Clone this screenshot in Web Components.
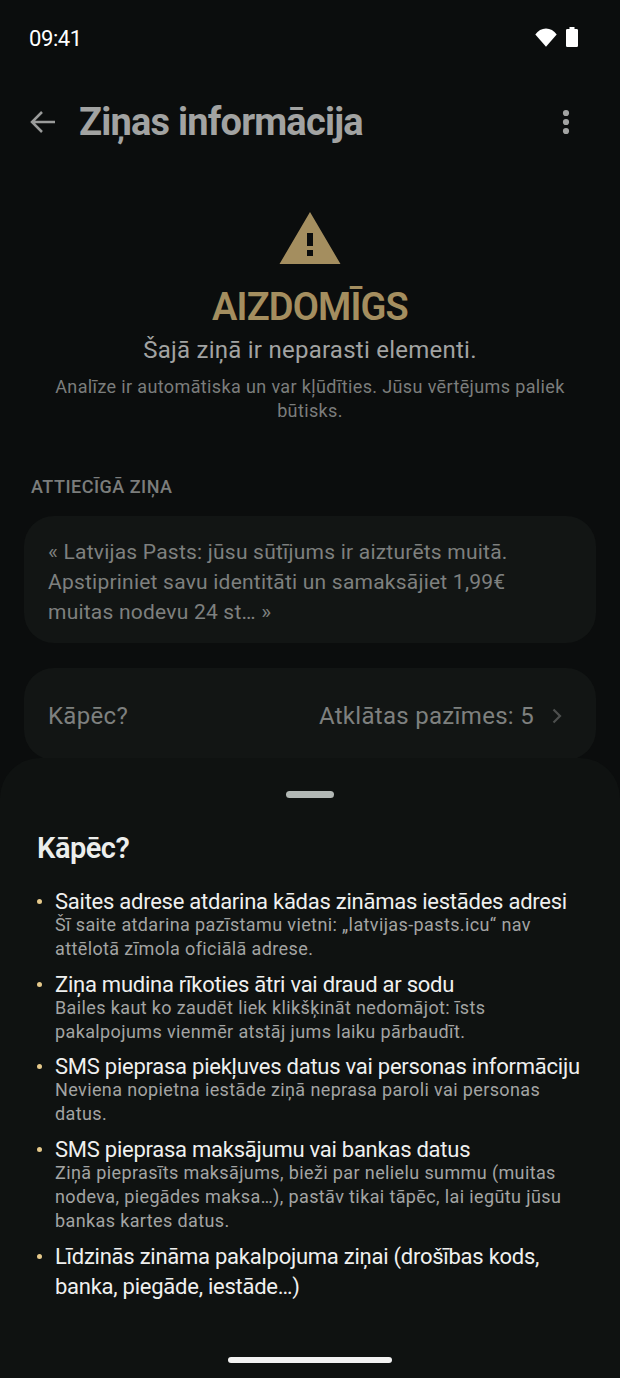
<!DOCTYPE html>
<html lang="lv"><head><meta charset="utf-8">
<style>
html,body{margin:0;padding:0;background:#0b0d0d}
body{width:620px;height:1378px;overflow:hidden;font-family:Roboto,"Noto Sans",sans-serif}
</style></head><body>
<app-screen>
  <status-bar></status-bar>
  <top-bar title="Ziņas informācija"></top-bar>
  <verdict-hero></verdict-hero>
  <section-label>ATTIECĪGĀ ZIŅA</section-label>
  <quote-card>« Latvijas Pasts: jūsu sūtījums ir aizturēts muitā. Apstipriniet savu identitāti un samaksājiet 1,99€ muitas nodevu 24 st… »</quote-card>
  <why-row></why-row>
  <bottom-sheet slot="sheet">
    <reason-item head="Saites adrese atdarina kādas zināmas iestādes adresi">Šī saite atdarina pazīstamu vietni: „latvijas-pasts.icu“ nav attēlotā zīmola oficiālā adrese.</reason-item>
    <reason-item head="Ziņa mudina rīkoties ātri vai draud ar sodu">Bailes kaut ko zaudēt liek klikšķināt nedomājot: īsts pakalpojums vienmēr atstāj jums laiku pārbaudīt.</reason-item>
    <reason-item head="SMS pieprasa piekļuves datus vai personas informāciju">Neviena nopietna iestāde ziņā neprasa paroli vai personas datus.</reason-item>
    <reason-item head="SMS pieprasa maksājumu vai bankas datus">Ziņā pieprasīts maksājums, bieži par nelielu summu (muitas nodeva, piegādes maksa…), pastāv tikai tāpēc, lai iegūtu jūsu bankas kartes datus.</reason-item>
    <reason-item head="Līdzinās zināma pakalpojuma ziņai (drošības kods, banka, piegāde, iestāde…)"></reason-item>
  </bottom-sheet>
</app-screen>
<script>
function def(name, html, init){
  customElements.define(name, class extends HTMLElement{
    constructor(){super();this.attachShadow({mode:'open'}).innerHTML=html;}
    connectedCallback(){ if(init) init(this); }
  });
}
def('app-screen',`<style>:host{display:block;position:relative;width:620px;height:1378px;overflow:hidden;background:#0b0d0d}</style><slot></slot><slot name="sheet"></slot>`);
def('status-bar',`<style>:host{display:flex;align-items:center;justify-content:space-between;height:24px;padding:27px 42px 0 29px;color:#fff}
.t{font-size:22px;line-height:24px;letter-spacing:-.4px}
.i{display:flex;align-items:center;gap:9px;margin-bottom:4px}svg{display:block}</style>
<span class="t">09:41</span><span class="i">
<svg width="22" height="19" viewBox="0 0 22 19"><path d="M0.3 6.400C3 2.800 6.800.5 11 .5s8 2.300 10.700 5.900L11 18.700z" fill="#fff"/></svg>
<svg width="12" height="20" viewBox="0 0 12 20"><path d="M3.500 0h5v2h2.200a1.300 1.300 0 0 1 1.300 1.300V18.700a1.300 1.300 0 0 1-1.300 1.300H1.300A1.300 1.300 0 0 1 0 18.700V3.300A1.300 1.300 0 0 1 1.300 2h2.200z" fill="#fff"/></svg></span>`);
def('top-bar',`<style>:host{display:flex;align-items:center;height:44px;margin-top:49px;padding:0 50px 0 30px;color:#a2a3a2}
svg{display:block;flex:none}h1{flex:1;margin:0 0 0 24px;font-size:38px;line-height:44px;font-weight:700;letter-spacing:-.8px;white-space:nowrap}</style>
<svg width="25" height="24" viewBox="0 0 25 24" fill="none" stroke="#9a9b9a" stroke-width="2.500"><path d="M25 12H2M12 2 2 12l10 10"/></svg>
<h1 id="h"></h1>
<svg width="8" height="26" viewBox="0 0 8 26" fill="#a2a3a2"><circle cx="4" cy="4" r="3.100"/><circle cx="4" cy="13" r="3.100"/><circle cx="4" cy="22" r="3.100"/></svg>`,
 el=>{el.shadowRoot.getElementById('h').textContent=el.getAttribute('title');});
def('verdict-hero',`<style>:host{display:flex;flex-direction:column;align-items:center;margin-top:67px;text-align:center}
svg{display:block}
.v{margin-top:19px;font-size:38px;line-height:46px;font-weight:600;color:#a48e5f;letter-spacing:-.85px}
.s{margin-top:4px;font-size:24px;line-height:32px;color:#a2a3a2;letter-spacing:.25px}
.n{margin-top:9px;width:540px;font-size:18px;line-height:24px;color:#7b7d7c;letter-spacing:.37px}</style>
<svg width="62" height="54" viewBox="0 0 62 54"><path fill-rule="evenodd" fill="#a48e5f" d="M31 1 61.500 53H.5zM28 22v13h6V22zM28 39v6h6v-6z"/></svg>
<div class="v">AIZDOMĪGS</div><div class="s">Šajā ziņā ir neparasti elementi.</div>
<div class="n">Analīze ir automātiska un var kļūdīties. Jūsu vērtējums paliek būtisks.</div>`);
def('section-label',`<style>:host{display:block;margin:52px 0 0 31px;font-size:18px;line-height:24px;font-weight:500;color:#7b7d7c;letter-spacing:.5px}</style><slot></slot>`);
def('quote-card',`<style>:host{display:block;margin:17px 24px 0 24px;padding:21px 24px 16px;border-radius:30px;background:#121514;color:#7e807f;font-size:21px;line-height:30px;letter-spacing:.22px}</style><slot></slot>`);
def('why-row',`<style>:host{display:flex;align-items:center;box-sizing:border-box;height:92px;margin:25px 24px 0;padding:4px 34px 0 24px;border-radius:30px;background:#121514;color:#7e807f;font-size:24px;letter-spacing:.3px}
.l{flex:1}svg{display:block;margin-left:18px}</style><span class="l">Kāpēc?</span><span>Atklātas pazīmes: 5</span>
<svg width="10" height="16" viewBox="0 0 10 16" fill="none" stroke="#4d4f4e" stroke-width="2.200"><path d="M1.500 1.500 8 8l-6.500 6.500"/></svg>`);
def('bottom-sheet',`<style>:host{display:block;position:absolute;left:0;right:0;bottom:0;top:758px;background:#0f1211;border-radius:40px 40px 0 0}
.g{width:48px;height:7px;border-radius:4px;background:#b2b8b5;margin:33px auto 0}
h2{margin:32px 0 0 37px;font-size:29px;line-height:36px;font-weight:600;color:#eceeec;letter-spacing:-.5px}
ul{margin:21px 0 0;padding:0 30px 0 36px;list-style:none}
.nav{position:absolute;left:228px;bottom:15px;width:164px;height:6px;border-radius:3px;background:#f2f2f2}</style>
<div class="g"></div><h2>Kāpēc?</h2><ul><slot></slot></ul><div class="nav"></div>`);
def('reason-item',`<style>:host{display:block;position:relative;padding-left:19px;margin-bottom:8.700px}
.d{position:absolute;left:1px;top:12px;width:5px;height:5px;border-radius:50%;background:#e5c98b}
.h{font-size:22px;line-height:30px;color:#eff0ef;letter-spacing:-.25px}
.b{font-size:18px;line-height:24px;color:#a3a4a3;letter-spacing:.38px;margin-top:-4px}
.b:empty{display:none}</style><i class="d"></i><div class="h" id="h"></div><div class="b"><slot></slot></div>`,
 el=>{el.shadowRoot.getElementById('h').textContent=el.getAttribute('head');});
</script>
</body></html>
